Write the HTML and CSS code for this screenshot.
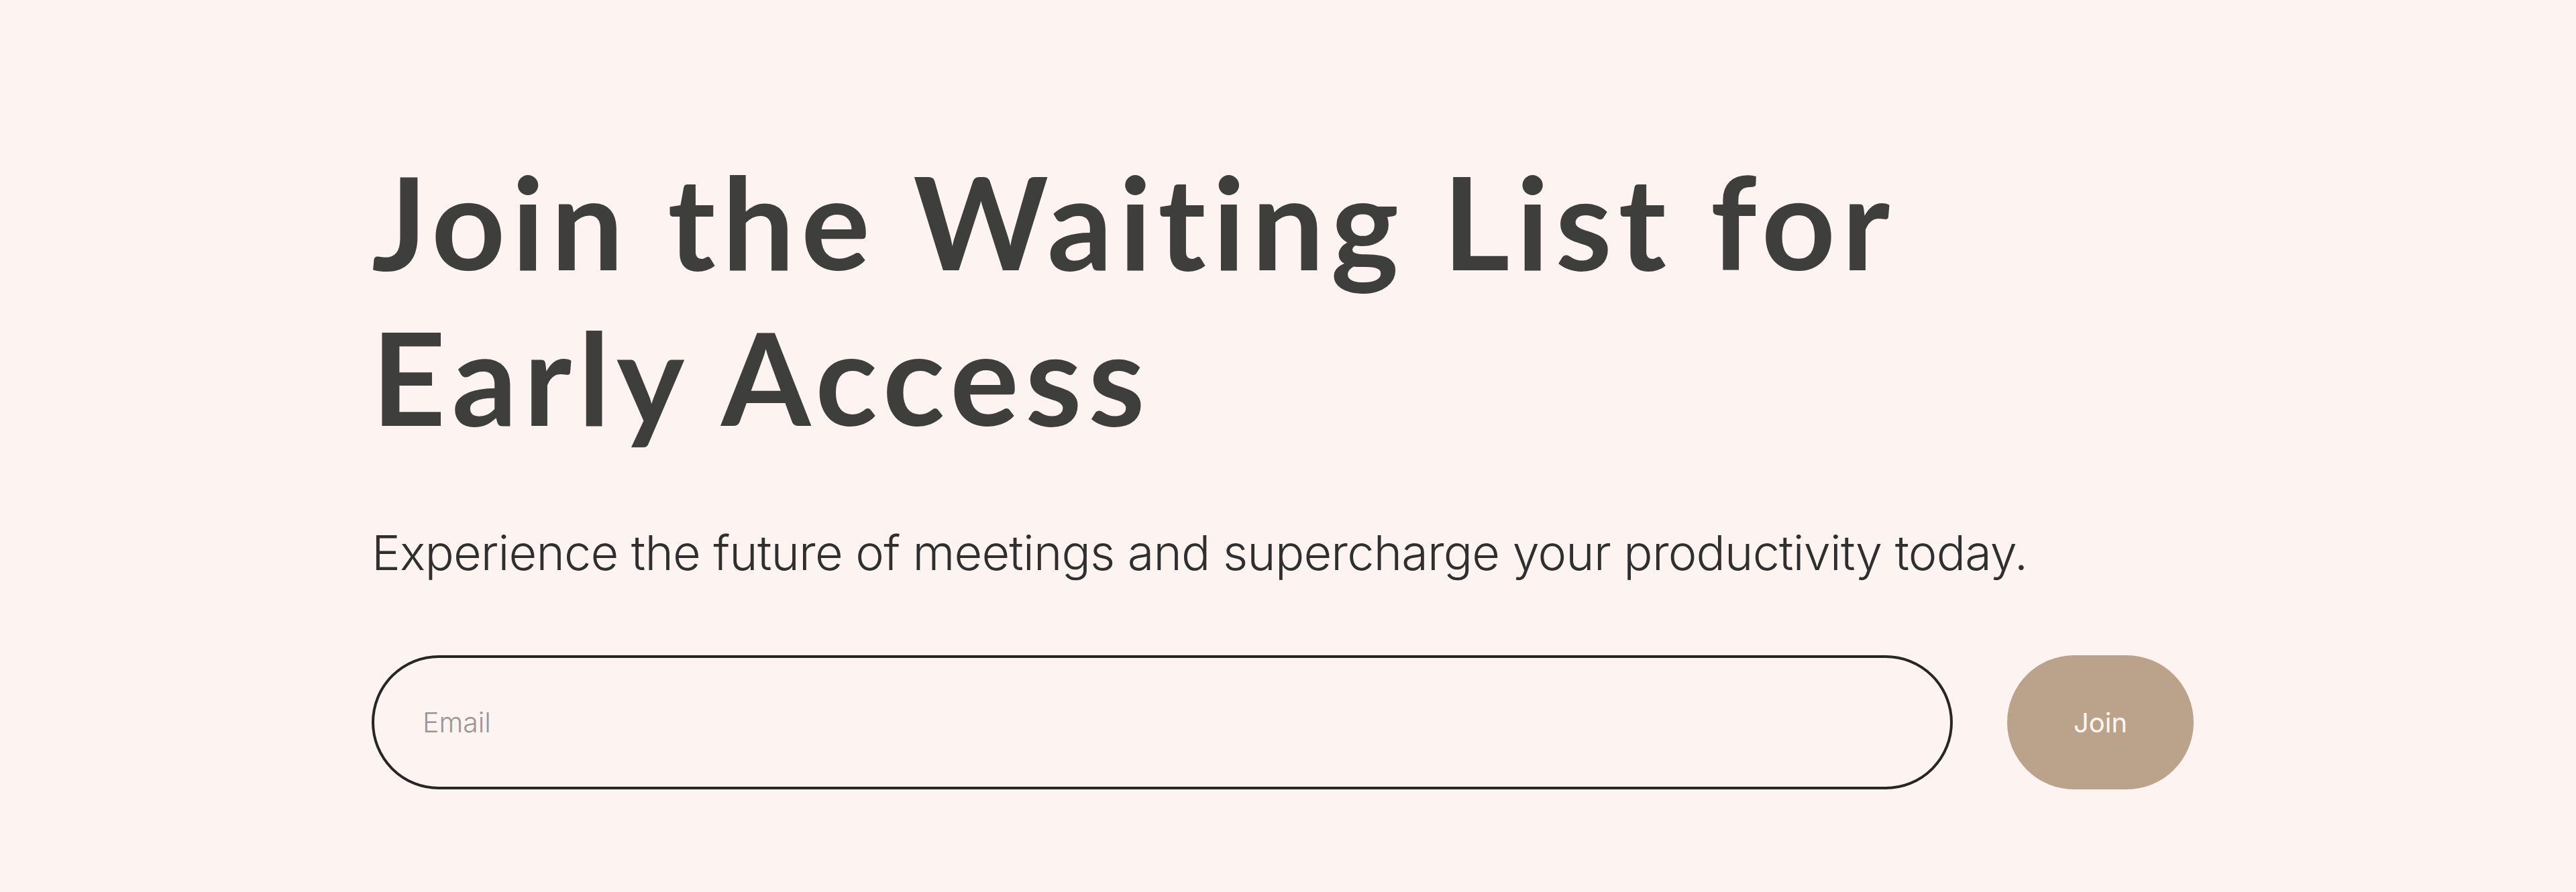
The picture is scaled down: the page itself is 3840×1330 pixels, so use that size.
FILE: index.html
```html
<!DOCTYPE html>
<html lang="en">
<head>
<meta charset="utf-8">
<title>Join the Waiting List</title>
<link rel="stylesheet" href="styles.css">
</head>
<body>
<main class="waitlist">
  <h1 class="waitlist__title">Join the Waiting List for<br>Early Access</h1>
  <p class="waitlist__lead">Experience the future of meetings and supercharge your productivity today.</p>
  <form class="waitlist__form" onsubmit="return false;">
    <input class="waitlist__input" type="email" placeholder="Email">
    <button class="waitlist__button" type="submit">Join</button>
  </form>
</main>
</body>
</html>
```

FILE: styles.css
```css
html, body {
  margin: 0;
  padding: 0;
  background: #fdf3f1;
}

body {
  width: 3840px;
  height: 1330px;
  overflow: hidden;
}

.waitlist {
  padding: 213px 0 0 554px;
  display: flex;
  flex-direction: column;
}

.waitlist__title {
  margin: 0;
  font-family: "Lato", "Liberation Sans", sans-serif;
  font-weight: 700;
  font-size: 192px;
  line-height: 232px;
  letter-spacing: 0.05em;
  color: #3e3f3c;
}

.waitlist__lead {
  margin: 104px 0 0 0;
  font-family: "Inter", "Liberation Sans", sans-serif;
  font-weight: 300;
  font-size: 72px;
  line-height: 86px;
  letter-spacing: -0.0115em;
  color: #2f2f2f;
}

.waitlist__form {
  margin-top: 110px;
  display: flex;
  align-items: center;
  gap: 81px;
}

.waitlist__input {
  box-sizing: border-box;
  width: 2357px;
  height: 200px;
  border: 4px solid #262626;
  border-radius: 100px;
  background: transparent;
  padding: 0 0 0 72px;
  font-family: "Inter", "Liberation Sans", sans-serif;
  font-weight: 300;
  font-size: 41px;
  color: #333;
  outline: none;
}

.waitlist__input::placeholder {
  color: #9b9593;
}

.waitlist__button {
  box-sizing: border-box;
  width: 278px;
  height: 200px;
  border: none;
  border-radius: 100px;
  background: #bba38b;
  color: #fdf6f0;
  font-family: "Inter", "Liberation Sans", sans-serif;
  font-weight: 400;
  font-size: 40px;
  cursor: pointer;
}
```
